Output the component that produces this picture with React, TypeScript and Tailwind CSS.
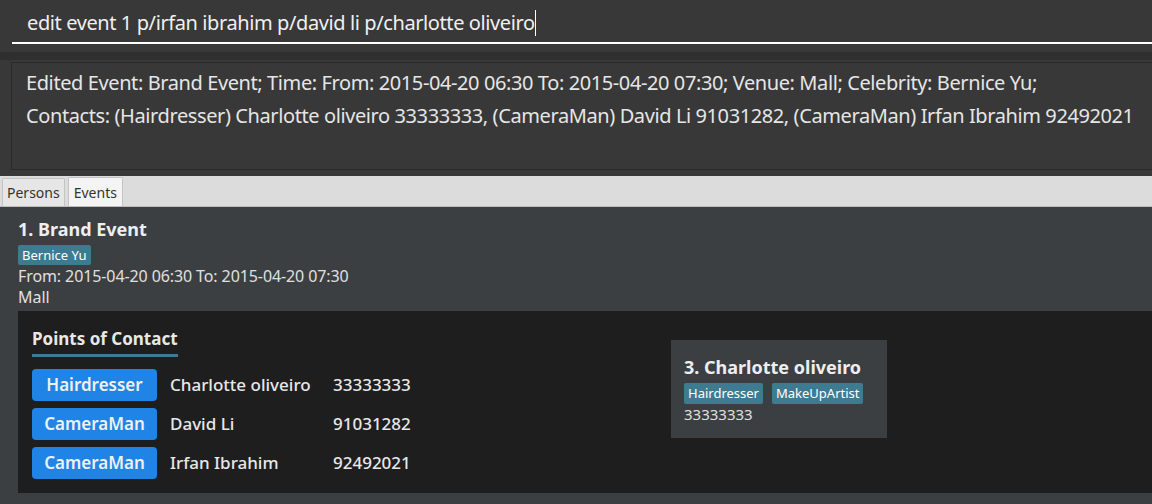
import React from "react";

export default function App() {
  const contacts = [
    { role: "Hairdresser", name: "Charlotte oliveiro", phone: "33333333" },
    { role: "CameraMan", name: "David Li", phone: "91031282" },
    { role: "CameraMan", name: "Irfan Ibrahim", phone: "92492021" },
  ];
  return (
    <div className="w-[1152px] h-[504px] overflow-hidden bg-[#383838] flex flex-col font-['Noto_Sans',sans-serif]">
      {/* command box */}
      <div className="h-[52px] shrink-0 bg-[#383838] pl-[12px] pt-[4px]">
        <div className="h-[40px] border-b-2 border-white flex items-center pl-[15px]">
          <span className="text-[20px] text-[#f0f0f0] tracking-[-0.4px]">edit event 1 p/irfan ibrahim p/david li p/charlotte oliveiro</span>
          <span className="w-px h-[26px] bg-white" />
        </div>
      </div>
      <div className="h-[8px] shrink-0 bg-[#2f2f2f]" />
      {/* result */}
      <div className="h-[116px] shrink-0 bg-[#383838] pl-[11px] pt-[2px] pb-[6px]">
        <div className="h-full border border-[#2a2a2a] border-r-0 bg-[#383838] pl-[14px] pt-[3px] text-[20px] leading-[33px] text-[#e6e6e6] tracking-[-0.4px]">
          <div>Edited Event: Brand Event; Time: From: 2015-04-20 06:30 To: 2015-04-20 07:30; Venue: Mall; Celebrity: Bernice Yu;</div>
          <div>Contacts: (Hairdresser) Charlotte oliveiro 33333333, (CameraMan) David Li 91031282, (CameraMan) Irfan Ibrahim 92492021</div>
        </div>
      </div>
      {/* tabs */}
      <div className="h-[31px] shrink-0 bg-[#dcdcdc] border-b border-[#bdbdbd] flex items-end gap-[3px] pl-[2px]">
        <div className="h-[28px] px-[4px] border border-b-0 border-[#c4c4c4] bg-[#e6e6e6] text-[14px] text-[#333] flex items-center rounded-t-[2px]">Persons</div>
        <div className="h-[29px] px-[5px] border border-b-0 border-[#c4c4c4] bg-[#f4f4f4] text-[14px] text-[#333] flex items-center rounded-t-[2px]">Events</div>
      </div>
      {/* list */}
      <div className="flex-1 bg-[#3c3f41] pl-[18px] pt-[10px] flex flex-col">
        <div className="text-[18px] font-bold text-[#eeeeee] leading-[24px]">1. Brand Event</div>
        <div className="mt-[4px] flex">
          <span className="bg-[#3e7b91] text-white text-[13px] leading-[20px] px-[4px] rounded-[2px]">Bernice Yu</span>
        </div>
        <div className="text-[16px] text-[#e0e0e0] leading-[21px] mt-[1px] tracking-[-0.1px]">From: 2015-04-20 06:30 To: 2015-04-20 07:30</div>
        <div className="text-[16px] text-[#e0e0e0] leading-[21px]">Mall</div>
        <div className="mt-[3px] h-[182px] bg-[#1e1e1e] flex">
          <div className="pl-[14px] pt-[16px] w-[653px] shrink-0">
            <div className="inline-block text-[17px] font-bold text-[#e8e8e8] leading-[22px] pb-[4px] border-b-[3px] border-[#3e7b91]">Points of Contact</div>
            <div className="mt-[12px] flex flex-col gap-[7px]">
              {contacts.map((c, i) => (
                <div key={i} className="flex items-center h-[32px]">
                  <div className="w-[125px] h-[32px] rounded-[4px] bg-[#1f84e6] text-[#f0f0f0] text-[17px] font-semibold flex items-center justify-center">{c.role}</div>
                  <div className="w-[176px] pl-[13px] text-[17px] font-medium text-[#e8e8e8]">{c.name}</div>
                  <div className="text-[17px] font-medium text-[#e8e8e8]">{c.phone}</div>
                </div>
              ))}
            </div>
          </div>
          <div className="pt-[29px]">
            <div className="w-[216px] h-[98px] bg-[#3c3f41] pl-[13px] pt-[15px]">
              <div className="text-[18px] font-bold text-[#eeeeee] leading-[24px]">3. Charlotte oliveiro</div>
              <div className="flex gap-[9px] mt-[4px]">
                <span className="bg-[#3e7b91] text-white text-[13px] leading-[21px] px-[4px] rounded-[2px]">Hairdresser</span>
                <span className="bg-[#3e7b91] text-white text-[13px] leading-[21px] px-[4px] rounded-[2px]">MakeUpArtist</span>
              </div>
              <div className="text-[15px] text-[#e0e0e0] leading-[20px]">33333333</div>
            </div>
          </div>
        </div>
      </div>
    </div>
  );
}
